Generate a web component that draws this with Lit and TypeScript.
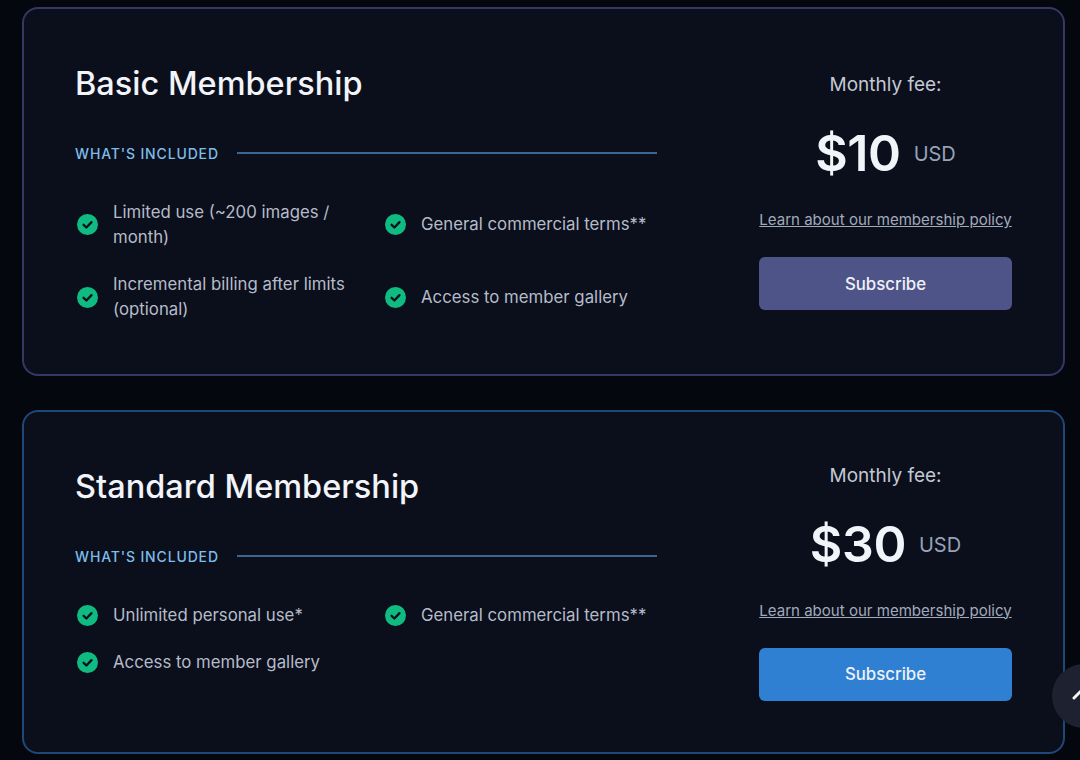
import { LitElement, html, css, svg } from "lit";
import { customElement } from "lit/decorators.js";

interface Plan {
  name: string;
  price: string;
  tone: string;
  items: string[];
}

const PLANS: Plan[] = [
  {
    name: "Basic Membership",
    price: "$10",
    tone: "basic",
    items: [
      "Limited use (~200 images / month)",
      "General commercial terms**",
      "Incremental billing after limits (optional)",
      "Access to member gallery",
    ],
  },
  {
    name: "Standard Membership",
    price: "$30",
    tone: "standard",
    items: ["Unlimited personal use*", "General commercial terms**", "Access to member gallery"],
  },
];

const check = svg`<circle cx="10.5" cy="10.5" r="10.5" fill="#10bb81"/><path d="M6.6 10.8l2.8 2.7 5.1-5.4" fill="none" stroke="#0b1020" stroke-width="2.3" stroke-linecap="round" stroke-linejoin="round"/>`;

@customElement("app-root")
export class AppRoot extends LitElement {
  static styles = css`
    :host {
      display: block;
      position: relative;
      width: 1080px;
      height: 760px;
      overflow: hidden;
      background: #05070f;
      font-family: "Inter", "Lato", sans-serif;
    }
    .page {
      display: flex;
      flex-direction: column;
      gap: 34px;
      padding: 7px 15px 0 22px;
    }
    .card {
      display: flex;
      align-items: center;
      justify-content: space-between;
      box-sizing: border-box;
      padding: 0 51px;
      border: 2px solid;
      border-radius: 16px;
      background: #0b0e1b;
    }
    .basic { border-color: #353865; height: 369px; }
    .standard { border-color: #1f4778; height: 344px; }
    .left { width: 582px; align-self: flex-start; padding-top: 50px; }
    h2 {
      margin: 0;
      font-size: 32.5px;
      line-height: 50px;
      font-weight: 500;
      color: #f1f4f9;
    }
    .inc {
      display: flex;
      align-items: center;
      gap: 18px;
      margin-top: 34px;
      height: 20px;
      font-size: 14px;
      font-weight: 500;
      letter-spacing: 0.85px;
      color: #7dbde8;
      white-space: nowrap;
    }
    .inc i { flex: 1; height: 2px; background: #3c6592; }
    ul {
      list-style: none;
      margin: 36.5px 0 0;
      padding: 0 0 0 2px;
      display: grid;
      grid-template-columns: 292px 1fr;
      column-gap: 16px;
      row-gap: 22.5px;
    }
    li {
      display: flex;
      align-items: center;
      gap: 15px;
      font-size: 16.8px;
      line-height: 25px;
      color: #b5bcc9;
    }
    li svg { flex: none; width: 21px; height: 21px; }
    .right {
      width: 253px;
      display: flex;
      flex-direction: column;
      align-items: center;
      margin-top: -1px;
    }
    .fee { font-size: 19px; line-height: 26px; color: #c3c9d4; }
    .price {
      display: flex;
      align-items: center;
      justify-content: center;
      gap: 13px;
      margin-top: 23px;
      height: 64px;
    }
    .amount { font-size: 50px; font-weight: 600; color: #f1f4f9; letter-spacing: -0.4px; }
    .usd { font-size: 20px; color: #97a3b6; margin-top: 2px; }
    a {
      margin-top: 25px;
      font-size: 15.05px;
      line-height: 20px;
      color: #a0aabb;
      text-decoration: underline;
      white-space: nowrap;
    }
    button {
      margin-top: 27px;
      width: 100%;
      height: 53px;
      border: 0;
      border-radius: 6px;
      font: 500 16.8px "Inter", "Lato", sans-serif;
      color: #eef1f7;
    }
    .basic button { background: #4f5488; }
    .standard button { background: #2f80d3; }
    .top {
      position: absolute;
      left: 1052px;
      top: 664px;
      width: 64px;
      height: 64px;
      border-radius: 50%;
      background: #1e2130;
    }
    .top svg { position: absolute; left: 20px; top: 22px; }
  `;

  render() {
    return html`
      <div class="page">
        ${PLANS.map(
          (p) => html`
            <section class="card ${p.tone}">
              <div class="left">
                <h2>${p.name}</h2>
                <div class="inc">WHAT'S INCLUDED<i></i></div>
                <ul>
                  ${p.items.map(
                    (t) => html`<li><svg viewBox="0 0 21 21">${check}</svg><span>${t}</span></li>`
                  )}
                </ul>
              </div>
              <div class="right">
                <div class="fee">Monthly fee:</div>
                <div class="price"><span class="amount">${p.price}</span><span class="usd">USD</span></div>
                <a>Learn about our membership policy</a>
                <button>Subscribe</button>
              </div>
            </section>
          `
        )}
      </div>
      <div class="top">
        <svg width="24" height="16" viewBox="0 0 24 16"><path d="M2 12l8-8 8 8" fill="none" stroke="#f4f5f7" stroke-width="3" stroke-linecap="round" stroke-linejoin="round"/></svg>
      </div>
    `;
  }
}
